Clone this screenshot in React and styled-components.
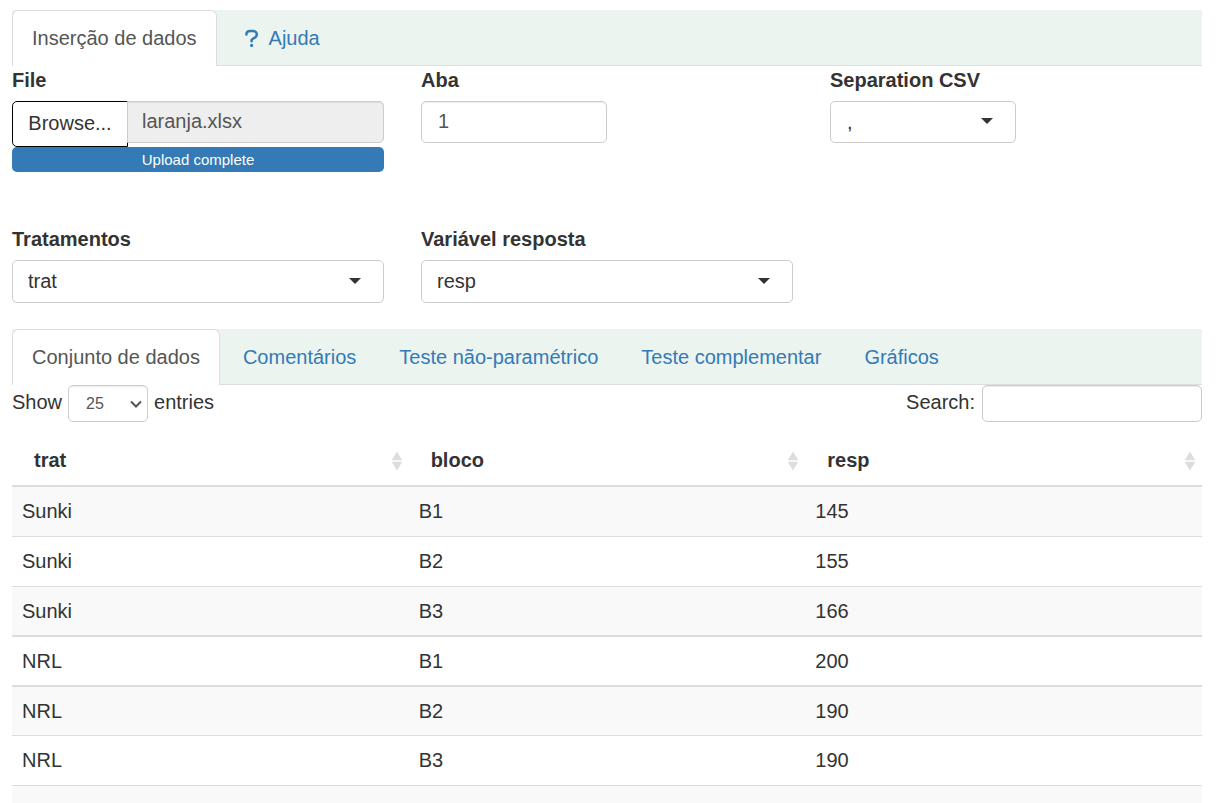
import React from "react";
import styled, { createGlobalStyle, css } from "styled-components";

const GlobalStyle = createGlobalStyle`
  * { box-sizing: border-box; }
  html { overflow: hidden; }
  body {
    margin: 0;
    background: #fff;
    color: #333;
    font-family: "Liberation Sans", Arial, sans-serif;
    font-size: 20px;
    line-height: 28px;
  }
  input, select, button { font: inherit; color: inherit; margin: 0; }
`;

const Page = styled.main`
  padding: 10px 21px 0 12px;
  height: 100vh;
  overflow: hidden;
`;

const TabBar = styled.nav`
  display: flex;
  gap: 3px;
  height: 56px;
  background: #ebf4ef;
  box-shadow: inset 0 -1px #ddd;
`;

const Tab = styled.a`
  display: flex;
  align-items: center;
  gap: 5px;
  padding: 0 19px 2px;
  border: 1px solid transparent;
  border-bottom: 0;
  color: #337ab7;
  text-decoration: none;
  ${({ $active }) =>
    $active &&
    css`
      color: #555;
      background: #fff;
      border-color: #ddd;
      border-radius: 6px 6px 0 0;
    `}
`;

const FieldGrid = styled.form`
  display: grid;
  grid-template-columns: repeat(3, minmax(0, 1fr));
  column-gap: 37px;
  row-gap: 53px;
  margin-bottom: 26px;
`;

const Field = styled.div`
  display: flex;
  flex-direction: column;
`;

const Label = styled.label`
  font-weight: 700;
  margin-bottom: 7px;
`;

const controlBorder = css`
  border: 1px solid #ccc;
  border-radius: 5px;
  background: #fff;
`;

const NumberInput = styled.input`
  ${controlBorder}
  width: 50%;
  height: 42px;
  padding: 0 16px 2px;
  color: #555;
  box-shadow: inset 0 1px 1px rgba(0, 0, 0, 0.075);
`;

const SelectWrap = styled.div`
  display: grid;
  align-items: center;
  width: ${({ $half }) => ($half ? "50%" : "100%")};
  & > * { grid-area: 1 / 1; }
`;

const Select = styled.select`
  ${controlBorder}
  appearance: none;
  width: 100%;
  height: ${({ $half }) => ($half ? "42px" : "43px")};
  padding: ${({ $half }) => ($half ? "0 16px" : "0 15px 2px")};
`;

const Caret = styled.span`
  justify-self: end;
  margin: 0 23px 2px 0;
  border: 6px solid transparent;
  border-top-color: #333;
  border-bottom: 0;
  pointer-events: none;
`;

const FileRow = styled.div`
  display: flex;
  align-items: flex-start;
  height: 46px;
`;

const BrowseButton = styled.button`
  height: 46px;
  width: 116px;
  padding: 0 0 2px;
  border: 1px solid #000;
  border-radius: 5px 0 0 5px;
  background: #fff;
`;

const FileName = styled.input`
  ${controlBorder}
  flex: 1;
  min-width: 0;
  height: 42px;
  margin-left: -1px;
  padding: 0 14px 2px;
  border-radius: 0 5px 5px 0;
  background: #eee;
  color: #555;
  box-shadow: inset 0 1px 1px rgba(0, 0, 0, 0.075);
`;

const UploadBar = styled.div`
  height: 25px;
  border-radius: 5px;
  background: #337ab7;
  color: #fff;
  font-size: 15px;
  line-height: 25px;
  text-align: center;
`;

const TableTools = styled.div`
  display: flex;
  justify-content: space-between;
  margin-bottom: 12px;
`;

const ToolLabel = styled.label`
  display: flex;
  gap: ${({ $gap }) => $gap};
  line-height: 34px;
`;

const LengthWrap = styled(SelectWrap)`
  width: 80px;
`;

const LengthSelect = styled.select`
  ${controlBorder}
  appearance: none;
  width: 100%;
  height: 37px;
  padding: 0 17px;
  font-size: 16px;
  color: #555;
  box-shadow: inset 0 1px 1px rgba(0, 0, 0, 0.075);
`;

const Chevron = styled.svg`
  justify-self: end;
  margin-right: 5px;
  pointer-events: none;
`;

const SearchInput = styled.input`
  ${controlBorder}
  width: 220px;
  height: 37px;
  padding: 0 12px;
  font-size: 16px;
  box-shadow: inset 0 1px 1px rgba(0, 0, 0, 0.075);
`;

const DataTable = styled.table`
  width: 100%;
  table-layout: fixed;
  border-collapse: separate;
  border-spacing: 0;
`;

const HeadCell = styled.th`
  height: 53px;
  padding: 0 6px 0 22px;
  border-bottom: 2px solid #ddd;
  text-align: left;
`;

const HeadContent = styled.div`
  display: flex;
  align-items: center;
  justify-content: space-between;
`;

const Row = styled.tr`
  &:nth-child(odd) { background: #f9f9f9; }
`;

const Cell = styled.td`
  height: ${({ $short }) => ($short ? "49px" : "50px")};
  padding: 10px 10px 0;
  vertical-align: top;
  border-bottom: ${({ $heavy }) => ($heavy ? "2px" : "1px")} solid #ddd;
`;

const SortIcon = () => (
  <svg width="12" height="22" viewBox="0 0 12 22" aria-hidden="true">
    <path d="M6 2.6 L11.3 11.2 H0.7 Z M0.7 12.8 H11.3 L6 21.4 Z" fill="#ddd" />
  </svg>
);

const QuestionIcon = () => (
  <svg width="24" height="20" viewBox="0 0 24 20" fill="none" aria-hidden="true">
    <path
      d="M6.4 6.6 C6.4 4.4 8 2.9 10.2 2.9 H12.8 C15.1 2.9 16.8 4.5 16.8 6.5 C16.8 8 16 9 14.8 9.7 L12.5 11 C11.9 11.4 11.6 11.8 11.6 12.5 V13.2"
      stroke="#337ab7"
      strokeWidth="2.5"
      strokeLinecap="round"
      strokeLinejoin="round"
    />
    <circle cx="11.6" cy="17.4" r="1.6" fill="#337ab7" />
  </svg>
);

const SelectField = ({ id, label, value, half }) => (
  <Field>
    <Label htmlFor={id}>{label}</Label>
    <SelectWrap $half={half}>
      <Select id={id} $half={half} defaultValue={value}>
        <option value={value}>{value}</option>
      </Select>
      <Caret />
    </SelectWrap>
  </Field>
);

const columns = ["trat", "bloco", "resp"];

const rows = [
  ["Sunki", "B1", 145],
  ["Sunki", "B2", 155],
  ["Sunki", "B3", 166],
  ["NRL", "B1", 200],
  ["NRL", "B2", 190],
  ["NRL", "B3", 190],
  ["FFL", "B1", 188],
];

const resultTabs = [
  "Conjunto de dados",
  "Comentários",
  "Teste não-paramétrico",
  "Teste complementar",
  "Gráficos",
];

export default function App() {
  return (
    <>
      <GlobalStyle />
      <Page>
        <TabBar>
          <Tab href="#dados" $active>Inserção de dados</Tab>
          <Tab href="#ajuda">
            <QuestionIcon />
            Ajuda
          </Tab>
        </TabBar>
        <FieldGrid>
          <Field>
            <Label htmlFor="browse">File</Label>
            <FileRow>
              <BrowseButton id="browse" type="button">Browse...</BrowseButton>
              <FileName aria-label="File name" readOnly value="laranja.xlsx" />
            </FileRow>
            <UploadBar>Upload complete</UploadBar>
          </Field>
          <Field>
            <Label htmlFor="aba">Aba</Label>
            <NumberInput id="aba" defaultValue="1" />
          </Field>
          <SelectField id="separation" label="Separation CSV" value="," half />
          <SelectField id="tratamentos" label="Tratamentos" value="trat" />
          <SelectField id="resposta" label="Variável resposta" value="resp" />
        </FieldGrid>
        <TabBar>
          {resultTabs.map((name, i) => (
            <Tab key={name} href={`#tab-${i}`} $active={i === 0}>{name}</Tab>
          ))}
        </TabBar>
        <TableTools>
          <ToolLabel $gap="6px">
            Show
            <LengthWrap>
              <LengthSelect defaultValue="25">
                <option>25</option>
                <option>50</option>
              </LengthSelect>
              <Chevron width="14" height="10" viewBox="0 0 14 10" fill="none">
                <path d="M2 2.5 L7 7.5 L12 2.5" stroke="#555" strokeWidth="2" />
              </Chevron>
            </LengthWrap>
            entries
          </ToolLabel>
          <ToolLabel $gap="7px">
            Search:
            <SearchInput type="search" />
          </ToolLabel>
        </TableTools>
        <DataTable>
          <thead>
            <tr>
              {columns.map((name) => (
                <HeadCell key={name} scope="col">
                  <HeadContent>
                    {name}
                    <SortIcon />
                  </HeadContent>
                </HeadCell>
              ))}
            </tr>
          </thead>
          <tbody>
            {rows.map((row, i) => (
              <Row key={i}>
                {row.map((value, j) => (
                  <Cell key={j} $heavy={i === 2 || i === 3} $short={i === 4}>
                    {value}
                  </Cell>
                ))}
              </Row>
            ))}
          </tbody>
        </DataTable>
      </Page>
    </>
  );
}
